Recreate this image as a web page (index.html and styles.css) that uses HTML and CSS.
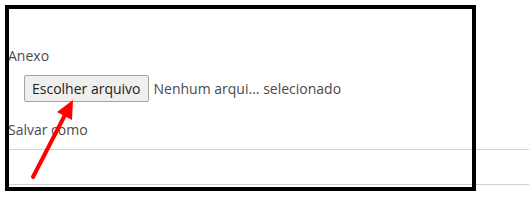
FILE: index.html
```html
<!DOCTYPE html>
<html lang="pt">
<head>
<meta charset="utf-8">
<link rel="stylesheet" href="styles.css">
</head>
<body>
<div class="page">
  <div class="group">
    <div class="label">Anexo</div>
    <div class="file-row">
      <span class="file-btn">Escolher arquivo</span>
      <span class="file-name">Nenhum arqui... selecionado</span>
    </div>
  </div>
  <div class="group">
    <div class="label label-save">Salvar como</div>
    <div class="field"></div>
  </div>
</div>
<div class="frame"></div>
<svg class="arrow" width="529" height="204" viewBox="0 0 529 204">
  <line x1="33" y1="177" x2="66" y2="113" stroke="#ff0000" stroke-width="4" stroke-linecap="round"/>
  <polygon points="73,100 57,112 72,120" fill="#ff0000"/>
</svg>
</body>
</html>
```
FILE: styles.css
```css
html, body {
  margin: 0;
  padding: 0;
  background: #ffffff;
  overflow: hidden;
}
body {
  width: 529px;
  height: 204px;
  position: relative;
  font-family: "Open Sans", "Noto Sans", sans-serif;
  font-size: 14px;
  color: #4a4a4a;
}
.page {
  padding: 46px 0 0 8px;
  display: flex;
  flex-direction: column;
}
.label {
  line-height: 20px;
  height: 20px;
}
.file-row {
  display: flex;
  align-items: center;
  gap: 5px;
  margin: 9px 0 0 16px;
}
.file-btn {
  display: inline-flex;
  align-items: center;
  height: 25px;
  padding: 0 7px;
  border: 1px solid #a3a3a3;
  border-radius: 2px;
  background: #efefef;
  color: #222;
}
.label-save {
  margin-top: 18px;
}
.field {
  margin-top: 9px;
  height: 34px;
  border: 1px solid #cfd3d6;
  border-right: none;
}
.frame {
  position: absolute;
  left: 5px;
  top: 5px;
  width: 463px;
  height: 178px;
  border: 4px solid #000;
}
.arrow {
  position: absolute;
  left: 0;
  top: 0;
}
```
